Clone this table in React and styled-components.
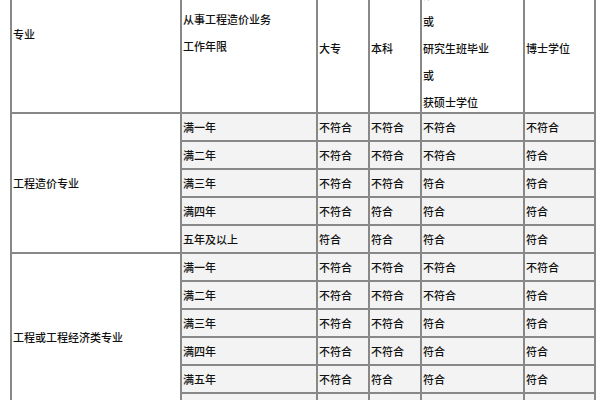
import React from 'react'
import styled, { createGlobalStyle } from 'styled-components'

const GlobalStyle = createGlobalStyle`
  html, body {
    margin: 0;
    padding: 0;
    background: #fff;
    overflow: hidden;
  }
  body {
    font-family: "Noto Sans CJK SC", "Noto Sans", sans-serif;
  }
`

const Page = styled.div`
  width: 600px;
  height: 400px;
  overflow: hidden;
  padding-left: 10px;
  box-sizing: border-box;
`

const Table = styled.table`
  margin-top: -27px;
  border-collapse: collapse;
  table-layout: fixed;
  width: 584px;
  font-size: 11px;
  font-weight: 500;
  color: #111;
`

const HeadRow = styled.tr`
  height: 139px;
`

const HeadCell = styled.th`
  padding: ${props => props.$top || 0}px 0 0 1px;
  border: 2px solid #888;
  background: #fff;
  font-weight: 500;
  text-align: left;
  vertical-align: top;
  line-height: 27px;
`

const Line = styled.div`
  white-space: nowrap;

  &:last-child {
    height: 22px;
  }
`

const Row = styled.tr`
  height: 28px;
`

const GroupCell = styled.td`
  padding: 0 0 0 1px;
  border: 2px solid #888;
  background: #fff;
  vertical-align: middle;
  white-space: nowrap;
`

const Cell = styled.td`
  padding: 0 0 0 1px;
  border: 2px solid #888;
  background: #f3f3f3;
  vertical-align: middle;
  white-space: nowrap;
  line-height: 14px;
`

const widths = [170, 136, 52, 52, 103, 71]

const yes = '符合'
const no = '不符合'

const groups = [
  {
    name: '工程造价专业',
    rows: [
      ['满一年', no, no, no, no],
      ['满二年', no, no, no, yes],
      ['满三年', no, no, yes, yes],
      ['满四年', no, yes, yes, yes],
      ['五年及以上', yes, yes, yes, yes],
    ],
  },
  {
    name: '工程或工程经济类专业',
    rows: [
      ['满一年', no, no, no, no],
      ['满二年', no, no, no, yes],
      ['满三年', no, no, yes, yes],
      ['满四年', no, no, yes, yes],
      ['满五年', no, yes, yes, yes],
      ['六年及以上', yes, yes, yes, yes],
    ],
  },
]

export default function App() {
  return (
    <Page>
      <GlobalStyle />
      <Table>
        <colgroup>
          {widths.map((w, i) => <col key={i} style={{ width: w }} />)}
        </colgroup>
        <thead>
          <HeadRow>
            <HeadCell $top={46}><Line>专业</Line></HeadCell>
            <HeadCell $top={31}>
              <Line>从事工程造价业务</Line>
              <Line>工作年限</Line>
            </HeadCell>
            <HeadCell $top={60}><Line>大专</Line></HeadCell>
            <HeadCell $top={60}><Line>本科</Line></HeadCell>
            <HeadCell $top={6}>
              <Line>第二学士学位</Line>
              <Line>或</Line>
              <Line>研究生班毕业</Line>
              <Line>或</Line>
              <Line>获硕士学位</Line>
            </HeadCell>
            <HeadCell $top={60}><Line>博士学位</Line></HeadCell>
          </HeadRow>
        </thead>
        <tbody>
          {groups.map(group =>
            group.rows.map((row, i) => (
              <Row key={group.name + i}>
                {i === 0 && (
                  <GroupCell rowSpan={group.rows.length}>{group.name}</GroupCell>
                )}
                {row.map((text, j) => <Cell key={j}>{text}</Cell>)}
              </Row>
            ))
          )}
        </tbody>
      </Table>
    </Page>
  )
}
